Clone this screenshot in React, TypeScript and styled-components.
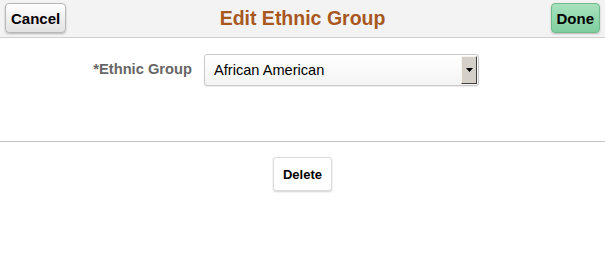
import React from 'react';
import styled, { createGlobalStyle } from 'styled-components';

const GlobalStyle = createGlobalStyle`
  html, body {
    margin: 0;
    padding: 0;
    background: #ffffff;
    font-family: 'Liberation Sans', Arial, sans-serif;
  }
`;

// styles
const Page = styled.div`
  width: 605px;
  height: 267px;
  background: #ffffff;
  display: flex;
  flex-direction: column;
`;

const Header = styled.header`
  height: 38px;
  box-sizing: border-box;
  background: #f3f3f3;
  border-bottom: 1px solid #cfcfcf;
  display: grid;
  grid-template-columns: 1fr auto 1fr;
  align-items: start;
  padding: 3px 5px 0 5px;
`;

const Title = styled.h1`
  margin: 0;
  padding-top: 4px;
  font-size: 19.5px;
  font-weight: bold;
  color: #a8581f;
`;

const HeaderButton = styled.button<{ $primary?: boolean }>`
  justify-self: ${(p) => (p.$primary ? 'end' : 'start')};
  height: 30px;
  box-sizing: border-box;
  padding: 0 5px;
  font-family: 'Liberation Sans', Arial, sans-serif;
  font-size: 15px;
  font-weight: bold;
  color: #000;
  border-radius: 4px;
  border: 1px solid ${(p) => (p.$primary ? '#6fb98a' : '#b8b8b8')};
  background: ${(p) =>
    p.$primary
      ? 'linear-gradient(#a8e2bd, #7fcf9f)'
      : 'linear-gradient(#ffffff, #e2e2e2)'};
  box-shadow: 0 1px 2px rgba(0, 0, 0, 0.25);
`;

const Form = styled.div`
  height: 104px;
  box-sizing: border-box;
  padding-top: 16px;
  border-bottom: 1px solid #c4c4c4;
  display: flex;
  align-items: flex-start;
`;

const Label = styled.label`
  width: 192px;
  box-sizing: border-box;
  text-align: right;
  padding-top: 7px;
  font-size: 14.7px;
  font-weight: bold;
  color: #666666;
`;

const Select = styled.div`
  margin-left: 12px;
  width: 275px;
  height: 32px;
  box-sizing: border-box;
  border: 1px solid #c9c9c9;
  border-radius: 3px;
  background: linear-gradient(#ffffff, #f4f4f4);
  box-shadow: 0 1px 1px rgba(0, 0, 0, 0.08);
  display: flex;
  align-items: center;
  padding: 0 0 0 9px;
`;

const SelectText = styled.span`
  flex: 1;
  font-size: 14.6px;
  color: #000;
`;

const Arrow = styled.div`
  width: 16px;
  height: 28px;
  box-sizing: border-box;
  margin-right: 1px;
  background: #d4d0c8;
  border-top: 1px solid #f4f3ee;
  border-left: 1px solid #f4f3ee;
  border-right: 1px solid #404040;
  border-bottom: 1px solid #404040;
  display: flex;
  align-items: center;
  justify-content: center;
`;

const Actions = styled.div`
  display: flex;
  justify-content: center;
  padding-top: 15px;
`;

const DeleteButton = styled.button`
  width: 59px;
  height: 34px;
  box-sizing: border-box;
  font-family: 'Liberation Sans', Arial, sans-serif;
  font-size: 13px;
  font-weight: bold;
  color: #000;
  background: #ffffff;
  border: 1px solid #dcdcdc;
  border-radius: 3px;
  box-shadow: 0 1px 2px rgba(0, 0, 0, 0.18);
`;

// markup
const App = () => {
  return (
    <Page>
      <GlobalStyle />
      <Header>
        <HeaderButton>Cancel</HeaderButton>
        <Title>Edit Ethnic Group</Title>
        <HeaderButton $primary>Done</HeaderButton>
      </Header>
      <Form>
        <Label>*Ethnic Group</Label>
        <Select>
          <SelectText>African American</SelectText>
          <Arrow>
            <svg width="7" height="4" viewBox="0 0 7 4">
              <path d="M0 0h7L3.5 4z" fill="#000" />
            </svg>
          </Arrow>
        </Select>
      </Form>
      <Actions>
        <DeleteButton>Delete</DeleteButton>
      </Actions>
    </Page>
  );
};

export default App;
